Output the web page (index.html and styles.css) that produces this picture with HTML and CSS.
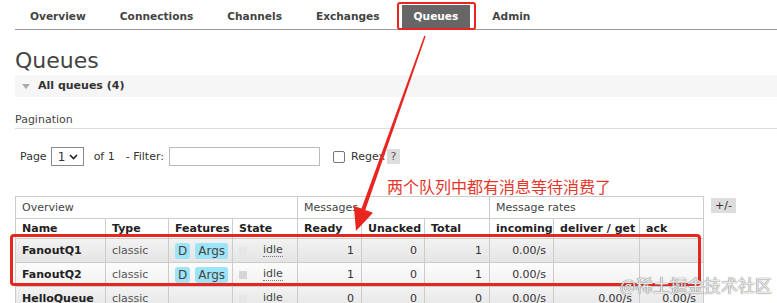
FILE: index.html
```html
<!DOCTYPE html>
<html>
<head>
  <meta charset="utf-8">
  <title>Queues</title>
  <link rel="stylesheet" href="styles.css">
</head>
<body>
  <div class="nav">
    <ul>
      <li>Overview</li>
      <li>Connections</li>
      <li>Channels</li>
      <li>Exchanges</li>
      <li class="active">Queues</li>
      <li>Admin</li>
    </ul>
  </div>

  <div class="main">
    <h1>Queues</h1>
    <div class="section_bar"><span class="tri"></span>All queues (4)</div>

    <h3 class="pag_title">Pagination</h3>
    <div class="filter_row">
      <span class="lbl">Page</span>
      <span class="select">1 <svg width="9" height="6" viewBox="0 0 9 6"><path d="M1 1 L4.5 4.5 L8 1" fill="none" stroke="#222" stroke-width="1.6"/></svg></span>
      <span class="lbl">of 1</span>
      <span class="lbl filter_lbl">- Filter:</span>
      <span class="input"></span>
      <span class="check"></span>
      <span class="regex">Regex</span>
      <span class="help">?</span>
    </div>

    <div class="note">两个队列中都有消息等待消费了</div>

    <div class="table_wrap">
      <table class="list">
        <colgroup>
          <col style="width:90px"><col style="width:63px"><col style="width:64px"><col style="width:65px">
          <col style="width:64px"><col style="width:63px"><col style="width:65px">
          <col style="width:64px"><col style="width:86px"><col style="width:64px">
        </colgroup>
        <tr class="group">
          <td colspan="4">Overview</td>
          <td colspan="3">Messages</td>
          <td colspan="3">Message rates</td>
        </tr>
        <tr class="head">
          <th>Name</th><th>Type</th><th class="light">Features</th><th>State</th>
          <th>Ready</th><th>Unacked</th><th>Total</th>
          <th>incoming</th><th>deliver / get</th><th>ack</th>
        </tr>
        <tr class="alt1">
          <td class="name">FanoutQ1</td><td class="type">classic</td>
          <td><span class="badge">D</span><span class="badge">Args</span></td>
          <td><span class="state"><span class="sq"></span><span class="idle">idle</span></span></td>
          <td class="num">1</td><td class="num">0</td><td class="num">1</td>
          <td class="num">0.00/s</td><td></td><td></td>
        </tr>
        <tr class="alt2">
          <td class="name">FanoutQ2</td><td class="type">classic</td>
          <td><span class="badge">D</span><span class="badge">Args</span></td>
          <td><span class="state"><span class="sq dark"></span><span class="idle">idle</span></span></td>
          <td class="num">1</td><td class="num">0</td><td class="num">1</td>
          <td class="num">0.00/s</td><td></td><td></td>
        </tr>
        <tr class="alt1">
          <td class="name">HelloQueue</td><td class="type">classic</td>
          <td></td>
          <td><span class="state"><span class="sq"></span><span class="idle">idle</span></span></td>
          <td class="num">0</td><td class="num">0</td><td class="num">0</td>
          <td class="num">0.00/s</td><td class="num">0.00/s</td><td class="num">0.00/s</td>
        </tr>
      </table>
      <span class="toggle">+/-</span>
    </div>
  </div>

  <!-- annotations drawn over the screenshot -->
  <div class="mark_tab"></div>
  <div class="mark_rows"></div>
  <svg class="arrow" width="777" height="303" viewBox="0 0 777 303">
    <polygon points="424.3,35.8 425.7,36.2 365.3,210 373,212.8 356,231 353.8,205.9 361.5,208.6" fill="#e8261f"/>
  </svg>
  <div class="watermark">@稀土掘金技术社区</div>
</body>
</html>
```

FILE: styles.css
```css
html, body {
  margin: 0;
  padding: 0;
  background: #fff;
}
body {
  width: 777px;
  height: 303px;
  overflow: hidden;
  position: relative;
  font-family: "DejaVu Sans", Verdana, sans-serif;
  font-size: 11px;
  color: #444;
}

/* top tabs */
.nav {
  margin-left: 15px;
  height: 29px;
  border-bottom: 1px solid #999;
}
.nav ul {
  list-style: none;
  margin: 0;
  padding: 5px 0 0 3px;
  display: flex;
  gap: 10px;
}
.nav li {
  height: 24px;
  line-height: 23px;
  padding: 0 12px;
  font-size: 10.6px;
  font-weight: bold;
  color: #444;
}
.nav li.active {
  background: #666;
  color: #fff;
}

.main {
  padding: 0 0 0 15px;
}
h1 {
  margin: 17px 0 0;
  font-size: 22px;
  line-height: 28px;
  font-weight: normal;
  color: #444;
}
.section_bar {
  height: 22px;
  line-height: 22px;
  background: #f6f6f6;
  font-weight: bold;
  color: #333;
  display: flex;
  align-items: center;
}
.tri {
  width: 0;
  height: 0;
  margin: 1px 8px 0 7px;
  border-left: 4.5px solid transparent;
  border-right: 4.5px solid transparent;
  border-top: 5px solid #aaa;
}
.pag_title {
  margin: 16px 0 0;
  height: 14px;
  line-height: 14px;
  padding-bottom: 1px;
  font-size: 11px;
  font-weight: normal;
  color: #444;
  border-bottom: 1px solid #ddd;
}
.filter_row {
  margin: 18px 0 0 5px;
  height: 19px;
  display: flex;
  align-items: center;
  color: #333;
}
.select {
  box-sizing: border-box;
  height: 19px;
  width: 33px;
  margin: 0 10px 0 4px;
  border: 1px solid #888;
  display: flex;
  align-items: center;
  justify-content: space-between;
  padding: 0 5px 0 6px;
  font-size: 12px;
}
.filter_lbl {
  margin-left: 11px;
}
.input {
  box-sizing: border-box;
  width: 151px;
  height: 19px;
  margin-left: 5px;
  border: 1px solid #bbb;
}
.check {
  box-sizing: border-box;
  width: 12px;
  height: 12px;
  margin-left: 13px;
  border: 1px solid #777;
  border-radius: 2px;
}
.regex {
  margin-left: 6px;
}
.help {
  margin-left: 2px;
  width: 13px;
  height: 15px;
  line-height: 15px;
  text-align: center;
  background: #ddd;
  color: #555;
}

.note {
  margin: 10px 0 0 372px;
  height: 20px;
  line-height: 20px;
  font-family: "Noto Sans CJK SC", sans-serif;
  font-size: 16px;
  color: #e5352b;
}

/* queue table */
.table_wrap {
  display: flex;
  align-items: flex-start;
}
table.list {
  table-layout: fixed;
  width: 689px;
  border-collapse: collapse;
}
.list td, .list th {
  border: 1px solid #ccc;
  padding: 0 6px;
  white-space: nowrap;
  overflow: hidden;
  text-align: left;
}
.list tr.group td {
  height: 21px;
  color: #444;
  background: #fff;
}
.list tr.head th {
  height: 19px;
  font-weight: bold;
  color: #222;
  background: #fff;
  border-bottom: none;
}
.list th.light {
  font-weight: normal;
  color: #444;
}
.list tr.alt1 td, .list tr.alt2 td {
  height: 23px;
}
.list tr.alt1 {
  background: linear-gradient(#f2f2f2, #e4e4e4);
}
.list tr.alt2 {
  background: linear-gradient(#fcfcfc, #f1f1f1);
}
.list td.name {
  font-weight: bold;
  color: #222;
}
.list td.type {
  color: #555;
}
.list td.num {
  text-align: right;
  padding-right: 7px;
  color: #333;
}
.badge {
  display: inline-block;
  height: 16px;
  line-height: 16px;
  padding: 0 3px;
  margin-right: 5px;
  border-radius: 3px;
  background: #9de4f7;
  color: #444;
  font-size: 12px;
}
.state {
  display: flex;
  align-items: center;
}
.sq {
  width: 8px;
  height: 8px;
  background: #e6e6e6;
}
.sq.dark {
  background: #d6d6d6;
}
.idle {
  margin-left: 16px;
  border-bottom: 1px dotted #777;
  line-height: 12px;
}
.toggle {
  margin: 2px 0 0 7px;
  padding: 0 4px;
  height: 15px;
  line-height: 15px;
  background: #ddd;
  color: #333;
}

/* red annotations */
.mark_tab {
  position: absolute;
  left: 397px;
  top: 2px;
  width: 75px;
  height: 24px;
  border: 2.5px solid #e8261f;
  border-radius: 3px;
}
.mark_rows {
  position: absolute;
  left: 10px;
  top: 234px;
  width: 685px;
  height: 46px;
  border: 3px solid #e8261f;
  border-radius: 4px;
}
.arrow {
  position: absolute;
  left: 0;
  top: 0;
}
.watermark {
  position: absolute;
  left: 620px;
  top: 274px;
  font-family: "Noto Sans CJK SC", sans-serif;
  font-size: 17px;
  line-height: 22px;
  color: rgba(255, 255, 255, 0.85);
  text-shadow: 0 0 1px #777, 0 0 1px #777;
}
```
